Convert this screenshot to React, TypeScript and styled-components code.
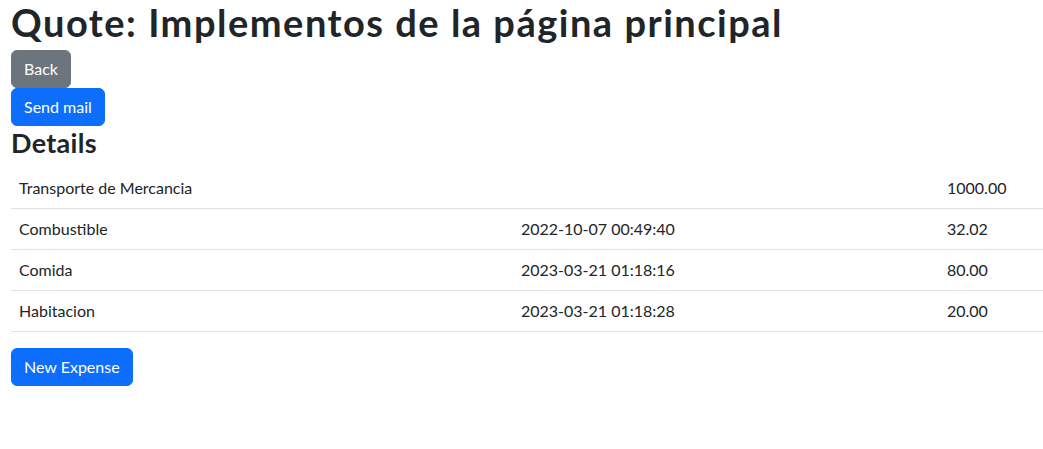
import styled, { createGlobalStyle } from "styled-components";

const GlobalStyle = createGlobalStyle`
  body {
    margin: 0;
    font-family: "Lato", "Noto Sans", sans-serif;
    font-size: 16px;
    line-height: 1.5;
    color: #212529;
    background: #fff;
  }
`;

const Page = styled.main`
  padding: 0 0 0 11px;
  display: flex;
  flex-direction: column;
  align-items: flex-start;
`;

const Title = styled.h1`
  font-size: 38px;
  font-weight: 700;
  letter-spacing: 1.5px;
  line-height: 44px;
  margin: 0 0 6px;
`;

const SubTitle = styled.h3`
  font-size: 27px;
  font-weight: 700;
  letter-spacing: 0.3px;
  line-height: 33px;
  margin: 0 0 9px;
`;

const Button = styled.button<{ $variant: "primary" | "secondary" }>`
  font-family: inherit;
  font-size: 16px;
  line-height: 24px;
  padding: 6px 12px;
  border: 1px solid ${p => (p.$variant === "primary" ? "#0d6efd" : "#6c757d")};
  border-radius: 6px;
  background: ${p => (p.$variant === "primary" ? "#0d6efd" : "#6c757d")};
  color: #fff;
  cursor: pointer;
`;

const Table = styled.table`
  width: 100%;
  border-collapse: collapse;
  margin-bottom: 16px;
  table-layout: fixed;
`;

const Cell = styled.td<{ $width?: number }>`
  padding: 8px;
  border-bottom: 1px solid #dee2e6;
  font-size: 16px;
  line-height: 24px;
  width: ${p => (p.$width ? `${p.$width}px` : "auto")};
  vertical-align: top;
`;

const rows = [
  { name: "Transporte de Mercancia", date: "", amount: "1000.00" },
  { name: "Combustible", date: "2022-10-07 00:49:40", amount: "32.02" },
  { name: "Comida", date: "2023-03-21 01:18:16", amount: "80.00" },
  { name: "Habitacion", date: "2023-03-21 01:18:28", amount: "20.00" },
];

export default function App() {
  return (
    <>
      <GlobalStyle />
      <Page>
        <Title>Quote: Implementos de la página principal</Title>
        <Button $variant="secondary">Back</Button>
        <Button $variant="primary">Send mail</Button>
        <SubTitle>Details</SubTitle>
        <Table>
          <tbody>
            {rows.map(r => (
              <tr key={r.name}>
                <Cell $width={486}>{r.name}</Cell>
                <Cell $width={410}>{r.date}</Cell>
                <Cell>{r.amount}</Cell>
              </tr>
            ))}
          </tbody>
        </Table>
        <Button $variant="primary">New Expense</Button>
      </Page>
    </>
  );
}
